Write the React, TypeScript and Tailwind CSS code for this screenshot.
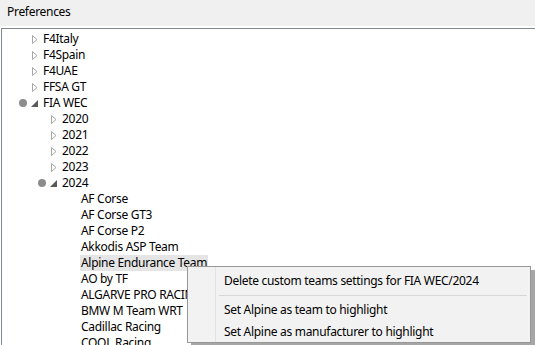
import React from "react";

type Node = { label: string; level: number; state?: "closed" | "open"; dot?: boolean; selected?: boolean };

const ROWS: Node[] = [
  { label: "F4Italy", level: 1, state: "closed" },
  { label: "F4Spain", level: 1, state: "closed" },
  { label: "F4UAE", level: 1, state: "closed" },
  { label: "FFSA GT", level: 1, state: "closed" },
  { label: "FIA WEC", level: 1, state: "open", dot: true },
  { label: "2020", level: 2, state: "closed" },
  { label: "2021", level: 2, state: "closed" },
  { label: "2022", level: 2, state: "closed" },
  { label: "2023", level: 2, state: "closed" },
  { label: "2024", level: 2, state: "open", dot: true },
  { label: "AF Corse", level: 3 },
  { label: "AF Corse GT3", level: 3 },
  { label: "AF Corse P2", level: 3 },
  { label: "Akkodis ASP Team", level: 3 },
  { label: "Alpine Endurance Team", level: 3, selected: true },
  { label: "AO by TF", level: 3 },
  { label: "ALGARVE PRO RACING", level: 3 },
  { label: "BMW M Team WRT", level: 3 },
  { label: "Cadillac Racing", level: 3 },
  { label: "COOL Racing", level: 3 },
];

const INDENT: Record<number, string> = {
  1: "pl-[40px]",
  2: "pl-[59px]",
  3: "pl-[78px]",
};

function Glyph({ state }: { state?: "closed" | "open" }) {
  if (state === "closed")
    return (
      <svg width="6" height="9" viewBox="0 0 6 9" className="absolute left-[-10px] top-[4px]">
        <path d="M0.5 0.5 L5 4.5 L0.5 8.5 Z" fill="none" stroke="#a6a6a6" strokeWidth="1" />
      </svg>
    );
  if (state === "open")
    return (
      <svg width="7" height="7" viewBox="0 0 7 7" className="absolute left-[-11px] top-[5px]">
        <path d="M7 0 L7 7 L0 7 Z" fill="#595959" />
      </svg>
    );
  return null;
}

function Row({ n }: { n: Node }) {
  return (
    <div className={`flex h-4 items-center ${INDENT[n.level]}`}>
      <div className="relative">
        {n.dot && <span className="absolute left-[-23px] top-[4px] h-[8px] w-[8px] rounded-full bg-[#8c8c8c]" />}
        <Glyph state={n.state} />
        <span className={`block whitespace-nowrap px-[1px] leading-4 ${n.selected ? "bg-[#e5e5e5]" : ""}`}>
          {n.label}
        </span>
      </div>
    </div>
  );
}

export default function App() {
  return (
    <div
      className="relative h-[345px] w-[535px] overflow-hidden bg-white text-[12px] tracking-[-0.3px] text-black"
      style={{ fontFamily: '"Noto Sans", "Segoe UI", sans-serif' }}
    >
      {/* Title strip */}
      <div className="flex h-[26px] items-center bg-[#f0f0f0] pl-[7px] pb-[3px]">Preferences</div>
      <div className="h-[2px] bg-white" />

      {/* Tree box */}
      <div className="ml-[1px] h-[317px] overflow-hidden border-l border-t border-[#828790] pt-[2px]">
        {ROWS.map((n) => (
          <Row key={n.label} n={n} />
        ))}
      </div>

      {/* Context menu */}
      <div className="absolute left-[187px] top-[266px] w-[344px] border border-[#979797] bg-[#f2f2f2] shadow-[4px_4px_0_rgba(0,0,0,0.35)]">
        <div className="flex">
          <div className="w-[28px] shrink-0 border-r border-[#e2e2e2]" />
          <div className="flex-1 pt-[3px]">
            <div className="flex h-[22px] items-center pl-[8px]">Delete custom teams settings for FIA WEC/2024</div>
            <div className="my-[3px] ml-[3px] mr-[3px] h-px bg-[#d7d7d7]" />
            <div className="flex h-[22px] items-center pl-[8px]">Set Alpine as team to highlight</div>
            <div className="flex h-[21px] items-center pl-[8px]">Set Alpine as manufacturer to highlight</div>
          </div>
        </div>
      </div>
    </div>
  );
}
